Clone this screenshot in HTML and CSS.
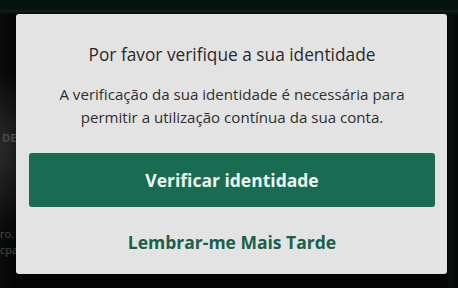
FILE: index.html
```html
<!DOCTYPE html>
<html lang="pt">
<head>
<meta charset="utf-8">
<link rel="stylesheet" href="styles.css">
</head>
<body>
<div class="backdrop">
  <span class="bg-text bg-de">DE</span>
  <span class="bg-text bg-ro">ro.</span>
  <span class="bg-text bg-cpa">cpa</span>
  <section class="dialog">
    <h1 class="title">Por favor verifique a sua identidade</h1>
    <p class="message">A verificação da sua identidade é necessária para<br>permitir a utilização contínua da sua conta.</p>
    <button class="primary">Verificar identidade</button>
    <button class="link">Lembrar-me Mais Tarde</button>
  </section>
</div>
</body>
</html>
```
FILE: styles.css
```css
html, body {
  margin: 0;
  padding: 0;
  width: 458px;
  height: 288px;
  overflow: hidden;
}
body {
  background: #070707;
  font-family: "Open Sans", "Noto Sans", sans-serif;
}
.backdrop {
  position: relative;
  width: 458px;
  height: 288px;
  box-sizing: border-box;
  padding: 14px 0 0 16px;
  background:
    linear-gradient(to bottom, #05140f 0, #05140f 10px, #16261f 11px, #05140f 12px, #05140f 14px, transparent 14px),
    radial-gradient(ellipse 40px 80px at 0 150px, #2a2a2a 0, transparent 100%),
    linear-gradient(to right, #0b0b0b 0, #050505 16px, #050505 447px, #07120e 450px, #050807 100%);
}
.bg-text {
  position: absolute;
  color: #4a4a4a;
  font-size: 11px;
  font-weight: 700;
}
.bg-de { left: 2px; top: 130px; }
.bg-ro { left: 0; top: 226px; font-weight: 400; }
.bg-cpa { left: 0; top: 242px; font-weight: 400; }
.dialog {
  position: relative;
  width: 431px;
  height: 260px;
  box-sizing: border-box;
  padding: 29px 12px 0 13px;
  background: #e3e3e3;
  border-radius: 3px;
  display: flex;
  flex-direction: column;
  align-items: stretch;
  text-align: center;
}
.title {
  margin: 0;
  font-size: 17.3px;
  font-weight: 400;
  line-height: 24px;
  color: #2a2a2a;
}
.message {
  margin: 15.5px 0 0;
  font-size: 15.1px;
  line-height: 23px;
  color: #2e2e2e;
}
.primary {
  margin-top: 24.5px;
  height: 54px;
  border: 0;
  border-radius: 3px;
  background: #196c51;
  color: #ecf8f1;
  font-family: inherit;
  font-size: 17.5px;
  font-weight: 700;
  padding: 0;
}
.link {
  margin-top: 23px;
  height: 24px;
  border: 0;
  background: transparent;
  color: #1b5f49;
  font-family: inherit;
  font-size: 17.5px;
  font-weight: 700;
  line-height: 24px;
  padding: 0;
}
```
